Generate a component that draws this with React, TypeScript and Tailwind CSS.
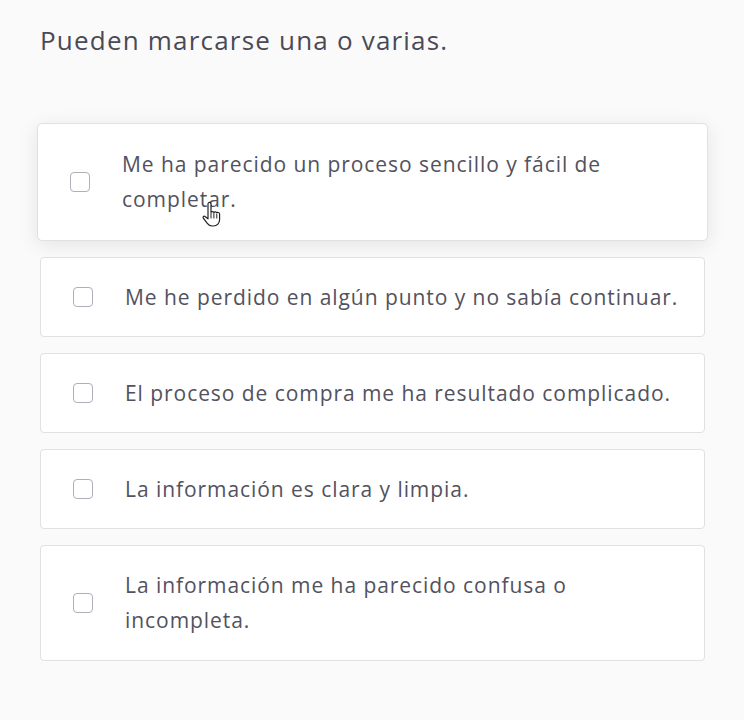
import React from "react";

const options: string[][] = [
  ["Me ha parecido un proceso sencillo y fácil de", "completar."],
  ["Me he perdido en algún punto y no sabía continuar."],
  ["El proceso de compra me ha resultado complicado."],
  ["La información es clara y limpia."],
  ["La información me ha parecido confusa o", "incompleta."],
];

function HandCursor() {
  return (
    <svg
      width="22"
      height="27"
      viewBox="0 0 22 26"
      className="pointer-events-none absolute left-[201px] top-[201px]"
    >
      <path
        d="M7 2.5c0-1 .7-1.6 1.5-1.6S10 1.5 10 2.5v8.2c.3-.9 2.6-.9 2.9.3.4-1 2.6-.9 2.9.5.5-1 2.8-.6 2.8 1V18c0 3.5-2.4 6.5-6.3 6.5h-1.2c-2.3 0-3.6-.9-4.8-2.6L2.3 16.6c-.8-1.1.6-2.6 1.8-1.6L7 17.3V2.5z"
        fill="#fff"
        stroke="#222"
        strokeWidth="1.2"
        strokeLinejoin="round"
      />
      <path d="M10 11v6M12.9 11.5v5.5M15.8 12.5V17" stroke="#222" strokeWidth="1" />
    </svg>
  );
}

export default function App() {
  return (
    <div className="relative min-h-[720px] w-[744px] bg-[#fafafb] pl-[40px] pr-[39px] pt-[22px] font-['Open_Sans',sans-serif]">
      <h1 className="text-[26px] leading-[36px] tracking-[1.2px] text-[#4a4a56]">
        Pueden marcarse una o varias.
      </h1>
      <div className="mt-[65px] flex flex-col gap-[16px]">
        {options.map((lines, i) => (
          <div
            key={i}
            className={
              i === 0
                ? "-mx-[3px] flex items-center rounded-[5px] border border-[#e0e0e5] bg-white py-[23px] pl-[32px] pr-[20px] shadow-[0_4px_20px_rgba(0,0,0,0.09)]"
                : lines.length > 1
                ? "flex items-center rounded-[4px] border border-[#e0e0e5] bg-white py-[22px] pl-[32px] pr-[20px]"
                : "flex items-center rounded-[4px] border border-[#e0e0e5] bg-white py-[21.5px] pl-[32px] pr-[20px]"
            }
          >
            <span className="h-[20px] w-[20px] shrink-0 rounded-[4px] border-[1.5px] border-[#afafb7] bg-white" />
            <span className="ml-[32px] whitespace-nowrap text-[21px] leading-[35px] tracking-[0.94px] text-[#52525e]">
              {lines.map((l, j) => (
                <React.Fragment key={j}>
                  {j > 0 && <br />}
                  {l}
                </React.Fragment>
              ))}
            </span>
          </div>
        ))}
      </div>
      <HandCursor />
    </div>
  );
}
